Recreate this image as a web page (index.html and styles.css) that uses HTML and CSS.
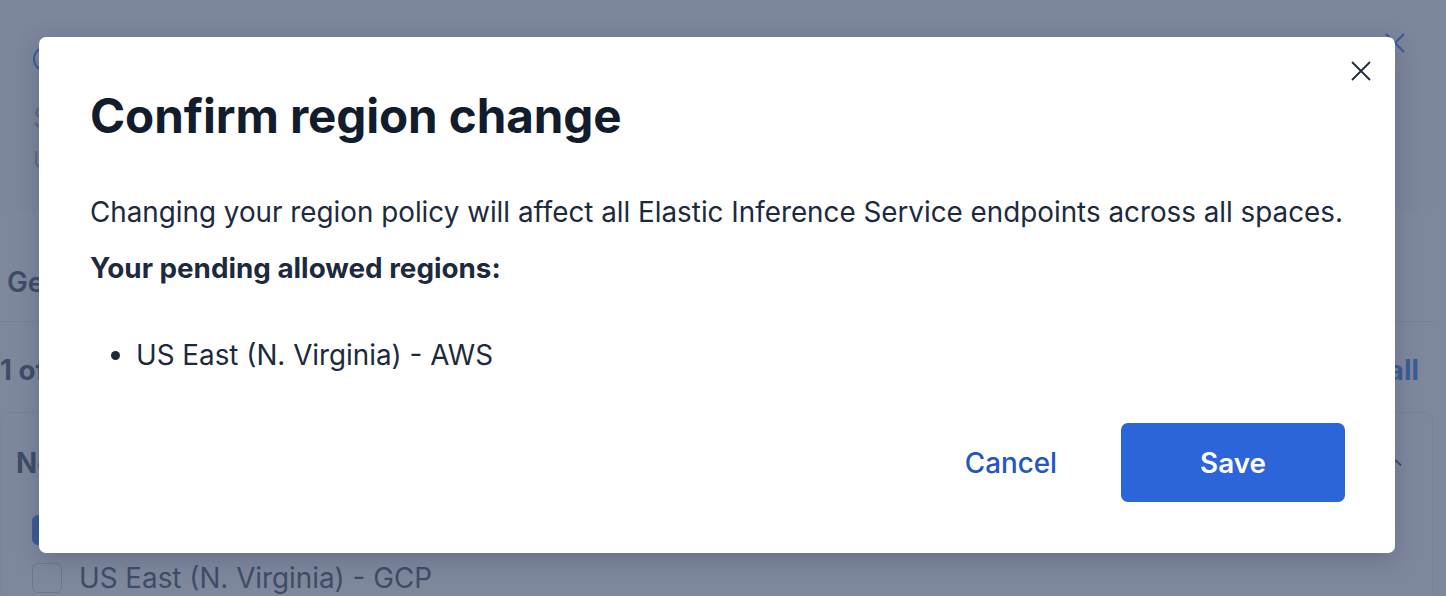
FILE: index.html
```html
<!DOCTYPE html>
<html lang="en">
<head>
<meta charset="utf-8">
<title>Confirm region change</title>
<link rel="stylesheet" href="styles.css">
</head>
<body>
<div class="flyout">
  <header class="fly-head">
    <div class="fly-head-main">
      <span class="fly-icon"></span>
      <div class="fly-title">Select regions for Elastic Inference Service</div>
      <div class="fly-sub">Use region policies to control where inference requests are processed.</div>
    </div>
    <span class="fly-close">
      <svg viewBox="0 0 20 20" width="20" height="20"><path d="M1 1L19 19M19 1L1 19" stroke="currentColor" stroke-width="2" fill="none"/></svg>
    </span>
  </header>
  <nav class="tabs"><span class="tab">General</span></nav>
  <section class="fly-body">
    <div class="toolbar"><span class="count">1 of 6 selected</span><span class="link">Select all</span></div>
    <div class="box">
      <div class="box-head"><span>North America</span>
        <svg class="chev" viewBox="0 0 16 16" width="16" height="16"><path d="M3 10.5L8 5.5L13 10.5" stroke="currentColor" stroke-width="1.8" fill="none"/></svg>
      </div>
      <div class="opt"><span class="cb checked"><svg viewBox="0 0 16 16" width="18" height="18"><path d="M3.5 8.5L6.5 11.5L12.5 4.5" stroke="#fff" stroke-width="2" fill="none"/></svg></span><span>US East (N. Virginia) - AWS</span></div>
      <div class="opt"><span class="cb"></span><span>US East (N. Virginia) - GCP</span></div>
    </div>
  </section>
</div>

<div class="overlay">
  <div class="modal" role="dialog">
    <button class="modal-close" aria-label="Close">
      <svg viewBox="0 0 20 20" width="20" height="20"><path d="M1 1L19 19M19 1L1 19" stroke="currentColor" stroke-width="1.8" fill="none"/></svg>
    </button>
    <h1 class="modal-title">Confirm region change</h1>
    <p class="modal-text">Changing your region policy will affect all Elastic Inference Service endpoints across all spaces.</p>
    <p class="modal-text strong">Your pending allowed regions:</p>
    <ul class="modal-list">
      <li>US East (N. Virginia) - AWS</li>
    </ul>
    <div class="modal-footer">
      <button class="btn-empty">Cancel</button>
      <button class="btn-primary">Save</button>
    </div>
  </div>
</div>
</body>
</html>
```

FILE: styles.css
```css
* { box-sizing: border-box; }
html, body { margin: 0; padding: 0; }
body {
  width: 1446px;
  height: 596px;
  overflow: hidden;
  background: #ffffff;
  font-family: "Inter", "Liberation Sans", sans-serif;
  color: #1d2a3e;
  position: relative;
}

/* background flyout */
.flyout { width: 1435px; }
.fly-head {
  height: 210px;
  background: #f6f8fc;
  display: flex;
  justify-content: space-between;
  padding: 0 30px 0 33px;
}
.fly-head-main { display: flex; flex-direction: column; }
.fly-icon {
  margin-top: 46px;
  width: 26px; height: 26px;
  border: 2px solid #0b64dd;
  border-radius: 50%;
}
.fly-title { margin-top: 26px; font-size: 27.8px; line-height: 40px; color: #8a95aa; }
.fly-sub { margin-top: 4px; font-size: 23px; line-height: 36px; color: #8a95aa; }
.fly-close { color: #0b64dd; margin-top: 33px; display: flex; }

.tabs {
  height: 112px;
  display: flex;
  align-items: flex-end;
  padding-left: 7px;
  border-bottom: 1px solid #e3e8f2;
}
.tab { font-size: 27.8px; line-height: 40px; font-weight: 600; padding-bottom: 19px; }

.fly-body { padding: 0; }
.toolbar {
  display: flex;
  justify-content: space-between;
  padding: 28px 16px 0 0;
  font-size: 27.8px;
  line-height: 40px;
  font-weight: 700;
}
.link { color: #0b64dd; }
.box {
  margin: 22px 2px 0 1px;
  border: 1.5px solid #e3e8f2;
  border-radius: 8px;
  padding: 30px 0 0 14px;
  height: 200px;
}
.box-head {
  display: flex;
  justify-content: space-between;
  align-items: center;
  font-size: 27.8px;
  line-height: 40px;
  font-weight: 700;
  padding-right: 28px;
}
.chev { color: #1d2a3e; }
.opt {
  display: flex;
  align-items: center;
  gap: 17px;
  height: 48px;
  padding-left: 16px;
  font-size: 27.8px;
}
.box-head + .opt { margin-top: 23px; }
.cb {
  width: 30px; height: 30px;
  border: 1.5px solid #b9c3d4;
  border-radius: 6px;
  background: #fff;
  display: flex; align-items: center; justify-content: center;
}
.cb.checked { background: #0b64dd; border-color: #0b64dd; }

/* overlay + modal */
.overlay {
  position: absolute;
  inset: 0;
  background: rgba(76, 90, 119, 0.72);
  padding: 37px 0 0 39px;
}
.modal {
  position: relative;
  width: 1356px;
  height: 516px;
  background: #ffffff;
  border-radius: 7px;
  box-shadow: 0 6px 24px rgba(30, 40, 70, 0.25);
  padding: 51px 50px 51px 51px;
  display: flex;
  flex-direction: column;
}
.modal-close {
  position: absolute;
  top: 24px;
  right: 24px;
  width: 20px;
  height: 20px;
  margin: 0;
  padding: 0;
  border: 0;
  background: none;
  color: #1d2a3e;
  display: flex;
}
.modal-title {
  margin: 0;
  font-size: 47.6px;
  line-height: 55px;
  font-weight: 700;
  color: #111c2c;
  letter-spacing: -0.1px;
}
.modal-text {
  margin: 49px 0 0;
  font-size: 27.8px;
  line-height: 40px;
  color: #1d2a3e;
}
.modal-text.strong { margin-top: 16px; font-weight: 700; }
.modal-list {
  margin: 47px 0 0;
  padding-left: 46px;
  font-size: 27.8px;
  line-height: 40px;
}
.modal-footer {
  margin-top: auto;
  display: flex;
  justify-content: flex-end;
  align-items: center;
  gap: 16px;
}
.btn-empty, .btn-primary {
  font-family: "Inter", "Liberation Sans", sans-serif;
  font-size: 27.8px;
  font-weight: 600;
  border: 0;
  border-radius: 7px;
  height: 79px;
  cursor: pointer;
  padding: 0;
}
.btn-empty { background: none; color: #2356c0; width: 188px; font-weight: 500; }
.btn-primary { background: #2b65d9; color: #ffffff; width: 224px; }
```
